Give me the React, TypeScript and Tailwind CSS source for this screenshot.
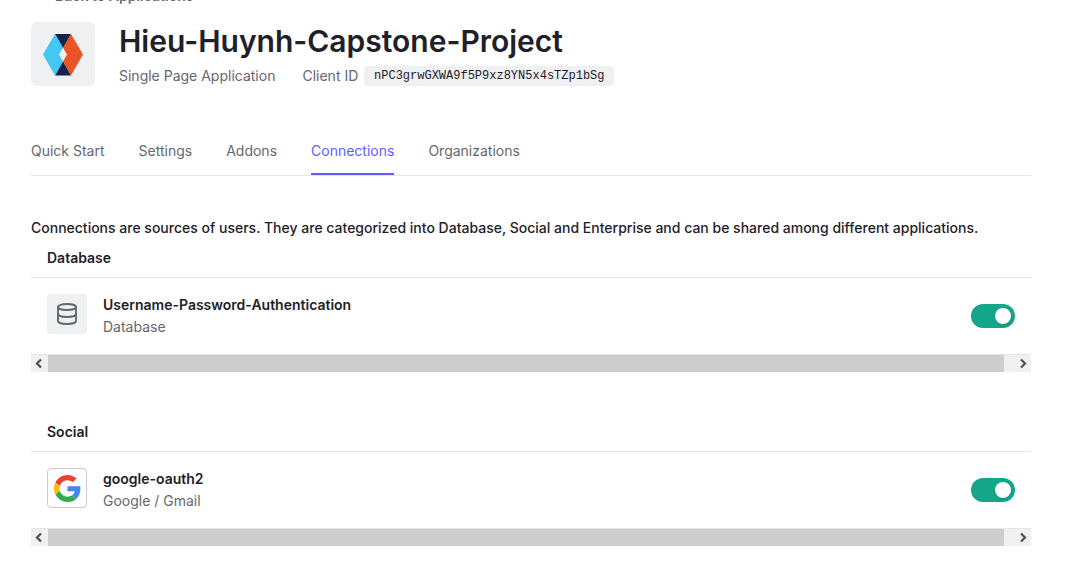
import { useState } from "react";
import type { ReactNode } from "react";

const tabs = ["Quick Start", "Settings", "Addons", "Connections", "Organizations"];

function AppLogo() {
  return (
    <svg viewBox="0 0 64 64" className="size-16" aria-hidden="true">
      <path d="M24 12H40L32 26.500Z" fill="#16214d" />
      <path d="M24 53.500H40L32 39Z" fill="#16214d" />
      <path d="M24 12L32 25.500L28 32.500L32 39.500L24 53.500L12 32.500Z" fill="#44c7f4" />
      <path d="M40 12L52 32.500L40 53.500L32 39.500L36 32.500L32 25.500Z" fill="#eb5424" />
    </svg>
  );
}

function DatabaseIcon() {
  return (
    <svg viewBox="0 0 24 24" className="size-6" fill="none" stroke="#65676e" strokeWidth="1.900" strokeLinecap="round" aria-hidden="true">
      <ellipse cx="12" cy="5" rx="9" ry="3" />
      <path d="M3 5V19C3 20.700 7 22 12 22S21 20.700 21 19V5" />
      <path d="M3 12C3 13.700 7 15 12 15S21 13.700 21 12" />
    </svg>
  );
}

function GoogleIcon() {
  return (
    <svg viewBox="0 0 48 48" className="size-[27px]" aria-hidden="true">
      <path fill="#EA4335" d="M24 9.500c3.540 0 6.710 1.220 9.210 3.600l6.850-6.850C35.900 2.380 30.470 0 24 0 14.620 0 6.510 5.380 2.560 13.220l7.980 6.190C12.430 13.720 17.740 9.500 24 9.500z" />
      <path fill="#4285F4" d="M46.980 24.550c0-1.570-.15-3.090-.38-4.550H24v9.020h12.940c-.58 2.960-2.260 5.480-4.780 7.180l7.730 6c4.510-4.180 7.090-10.360 7.090-17.650z" />
      <path fill="#FBBC05" d="M10.530 28.590c-.48-1.450-.76-2.990-.76-4.590s.27-3.140.76-4.590l-7.980-6.190C.92 16.460 0 20.120 0 24c0 3.880.92 7.540 2.560 10.780l7.970-6.190z" />
      <path fill="#34A853" d="M24 48c6.480 0 11.930-2.130 15.890-5.810l-7.730-6c-2.150 1.450-4.920 2.300-8.160 2.300-6.260 0-11.570-4.220-13.470-9.910l-7.980 6.190C6.510 42.620 14.620 48 24 48z" />
    </svg>
  );
}

function Chevron({ d }: { d: string }) {
  return (
    <svg viewBox="0 0 17 17" className="size-[17px]" fill="none" stroke="#505050" strokeWidth="2.200" aria-hidden="true">
      <path d={d} />
    </svg>
  );
}

function ScrollStrip() {
  return (
    <div className="flex h-[18px] border-t border-[#e3e4e6] bg-[#f0f0f0]">
      <button type="button" aria-label="Scroll left" className="w-[17px]">
        <Chevron d="M10 4.500L6 8.500L10 12.500" />
      </button>
      <div className="mr-2.5 grow bg-[#cdcdcd]" />
      <button type="button" aria-label="Scroll right" className="w-[17px]">
        <Chevron d="M7 4.500L11 8.500L7 12.500" />
      </button>
    </div>
  );
}

type ConnectionProps = {
  id: string;
  heading: string;
  name: string;
  kind: string;
  icon: ReactNode;
};

function Connection({ id, heading, name, kind, icon }: ConnectionProps) {
  const [enabled, setEnabled] = useState(true);
  return (
    <section>
      <h2 className="border-b border-[#e3e4e6] px-4 pt-1.5 pb-[7px] text-sm leading-6 font-semibold">{heading}</h2>
      <div className="flex items-start gap-4 p-4">
        {icon}
        <label htmlFor={id} className="grow text-sm leading-[22px]">
          <span className="block font-semibold">{name}</span>
          <span className="block text-[#65676e]">{kind}</span>
        </label>
        <input
          id={id}
          type="checkbox"
          role="switch"
          checked={enabled}
          onChange={(e) => setEnabled(e.target.checked)}
          className="mt-2.5 h-6 w-11 shrink-0 cursor-pointer appearance-none rounded-full bg-[#c9cace] p-1 before:block before:size-4 before:rounded-full before:bg-white before:shadow checked:bg-[#13a688] checked:before:ml-5"
        />
      </div>
      <ScrollStrip />
    </section>
  );
}

export default function App() {
  return (
    <main className="overflow-hidden bg-white pr-[55px] pb-4 pl-[31px] font-['Inter',sans-serif] text-[#1e212a]">
      <a href="#applications" className="-mt-3.5 flex items-center gap-2 text-sm leading-5 font-semibold text-[#65676e]">
        <svg viewBox="0 0 16 16" className="size-4" fill="none" stroke="currentColor" strokeWidth="1.500" aria-hidden="true">
          <path d="M13 6H3M7 2L3 6L7 10" />
        </svg>
        Back to Applications
      </a>

      <header className="mt-4 flex gap-6">
        <div className="size-16 shrink-0 overflow-hidden rounded-md bg-[#eff0f2]">
          <AppLogo />
        </div>
        <div>
          <h1 className="text-3xl leading-[38px] font-semibold">Hieu-Huynh-Capstone-Project</h1>
          <div className="mt-1.5 flex items-center gap-[27px] text-sm leading-5 text-[#65676e]">
            <span>Single Page Application</span>
            <span className="flex items-center gap-1.5">
              Client ID
              <code className="min-w-[250px] rounded bg-[#eff0f2] px-1.5 text-center font-['Liberation_Mono',monospace] text-xs leading-5 text-[#1e212a]">
                nPC3grwGXWA9f5P9xz8YN5x4sTZp1bSg
              </code>
            </span>
          </div>
        </div>
      </header>

      <nav className="mt-[39px] flex gap-[34px] border-b border-[#e3e4e6] text-sm leading-5 text-[#65676e]">
        {tabs.map((tab) => (
          <a
            key={tab}
            href={"#" + tab}
            aria-current={tab === "Connections" ? "page" : undefined}
            className="border-b-2 border-transparent pt-4 pb-3 aria-[current=page]:border-[#635dff] aria-[current=page]:text-[#635dff]"
          >
            {tab}
          </a>
        ))}
      </nav>

      <p className="mt-10 text-sm leading-6 font-medium">
        Connections are sources of users. They are categorized into Database, Social and Enterprise and can be shared among different applications.
      </p>

      <div className="flex flex-col gap-[42px]">
        <Connection
          id="database-connection"
          heading="Database"
          name="Username-Password-Authentication"
          kind="Database"
          icon={
            <div className="flex size-10 shrink-0 items-center justify-center rounded-sm bg-[#eff0f2]">
              <DatabaseIcon />
            </div>
          }
        />
        <Connection
          id="google-connection"
          heading="Social"
          name="google-oauth2"
          kind="Google / Gmail"
          icon={
            <div className="flex size-10 shrink-0 items-center justify-center rounded-sm border border-[#c9cace] bg-white">
              <GoogleIcon />
            </div>
          }
        />
      </div>
    </main>
  );
}
